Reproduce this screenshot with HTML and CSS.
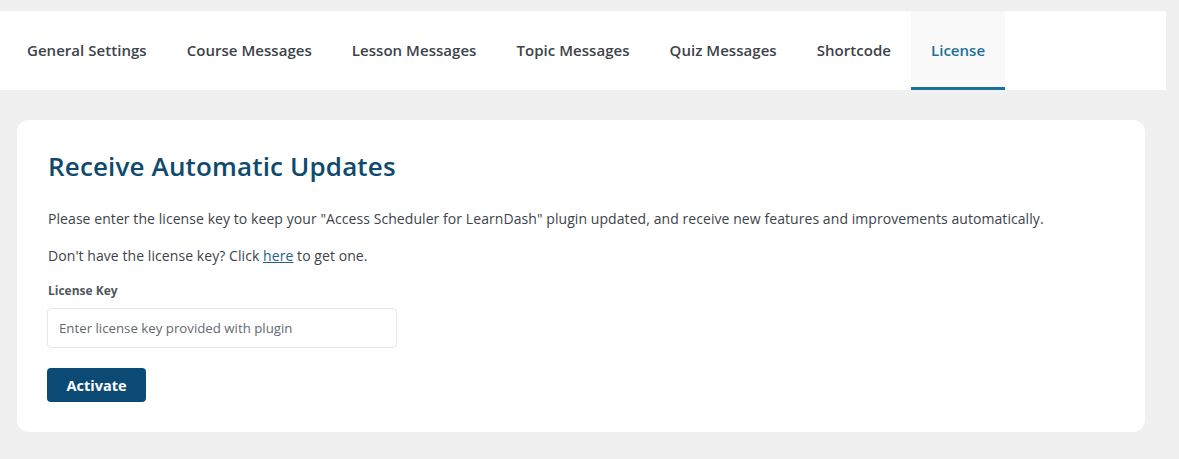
FILE: index.html
```html
<!DOCTYPE html>
<html>
<head>
<meta charset="utf-8">
<link rel="stylesheet" href="styles.css">
</head>
<body>
<div class="page">
  <nav class="tabs">
    <a class="tab">General Settings</a>
    <a class="tab">Course Messages</a>
    <a class="tab">Lesson Messages</a>
    <a class="tab">Topic Messages</a>
    <a class="tab">Quiz Messages</a>
    <a class="tab">Shortcode</a>
    <a class="tab active">License</a>
  </nav>
  <section class="card">
    <h1 class="title">Receive Automatic Updates</h1>
    <p class="text">Please enter the license key to keep your "Access Scheduler for LearnDash" plugin updated, and receive new features and improvements automatically.</p>
    <p class="text last">Don't have the license key? Click <a class="link">here</a> to get one.</p>
    <label class="label">License Key</label>
    <input class="input" type="text" placeholder="Enter license key provided with plugin">
    <button class="btn">Activate</button>
  </section>
</div>
</body>
</html>
```

FILE: styles.css
```css
* { box-sizing: border-box; }
body {
  margin: 0;
  background: #f0f0f1;
  font-family: "Open Sans", "Noto Sans", sans-serif;
  color: #3c434a;
}
.page {
  padding-top: 11px;
}
.tabs {
  display: flex;
  width: 1166px;
  height: 79px;
  background: #fff;
  padding-left: 7px;
}
.tab {
  display: flex;
  align-items: center;
  padding: 1px 20px 0;
  font-size: 15px;
  font-weight: 600;
  letter-spacing: 0.04px;
  color: #3c434a;
  border-bottom: 3px solid transparent;
}
.tab.active {
  background: #f9f9f9;
  color: #1d7199;
  border-bottom-color: #1d7199;
}
.card {
  width: 1128px;
  margin: 30px 0 0 17px;
  background: #fff;
  border-radius: 12px;
  padding: 28px 30px 30px 31px;
  display: flex;
  flex-direction: column;
  align-items: flex-start;
}
.title {
  margin: 0 0 25px;
  font-size: 26px;
  font-weight: 600;
  color: #0e4a6e;
  line-height: 36px;
  letter-spacing: 0.15px;
}
.text {
  margin: 0 0 17px;
  font-size: 14px;
  line-height: 20px;
  letter-spacing: 0.07px;
}
.text.last {
  margin-bottom: 16px;
}
.link {
  color: #1d5f8a;
  text-decoration: underline;
}
.label {
  font-size: 12px;
  font-weight: 700;
  color: #50575e;
  margin: 0 0 8px;
  line-height: 18px;
}
.input {
  width: 350px;
  height: 40px;
  border: 1px solid #e6e6e6;
  border-radius: 4px;
  padding: 0 11px;
  font-family: inherit;
  font-size: 13.25px;
  color: #3c434a;
  margin: 0 0 20px -1px;
}
.input::placeholder {
  color: #646970;
}
.btn {
  margin-left: -1px;
  width: 99px;
  height: 34px;
  border: 0;
  border-radius: 4px;
  background: #0b4a75;
  color: #fff;
  font-family: inherit;
  font-size: 14.5px;
  font-weight: 700;
}
```
